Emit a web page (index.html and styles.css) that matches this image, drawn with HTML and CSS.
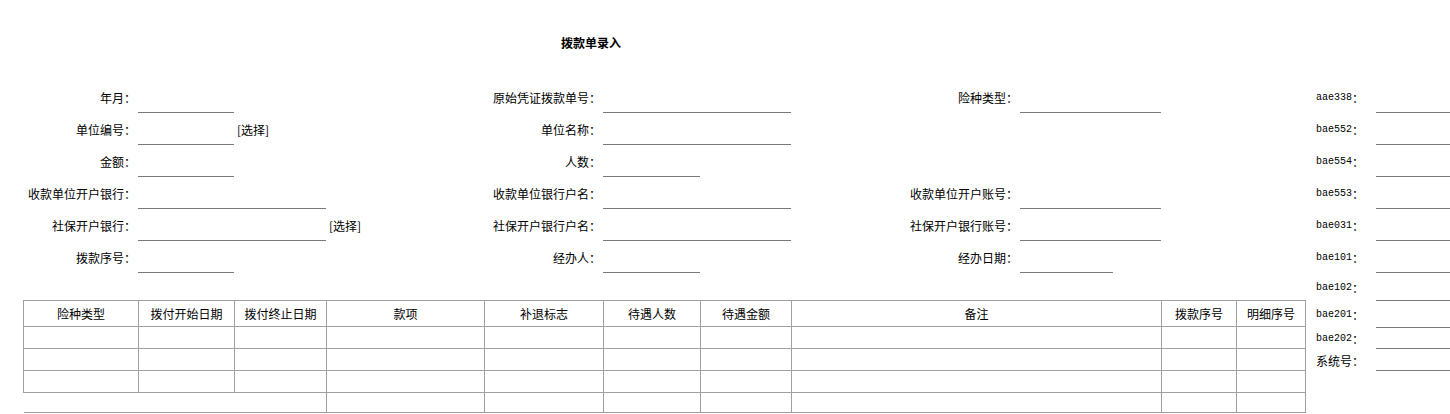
FILE: index.html
```html
<!DOCTYPE html>
<html lang="zh-CN">
<head>
<meta charset="utf-8">
<title>拨款单录入</title>
<link rel="stylesheet" href="styles.css">
</head>
<body>
<div class="page">
  <div class="main">
    <div class="title">拨款单录入</div>
    <div class="form">
      <label class="lbl">年月：</label>
      <div class="field"><input class="in short" type="text"></div>
      <label class="lbl">原始凭证拨款单号：</label>
      <div class="field"><input class="in long" type="text"></div>
      <label class="lbl">险种类型：</label>
      <div class="field"><input class="in mid" type="text"></div>

      <label class="lbl">单位编号：</label>
      <div class="field"><input class="in short" type="text"><span class="pick">[选择]</span></div>
      <label class="lbl">单位名称：</label>
      <div class="field"><input class="in long" type="text"></div>
      <div class="lbl"></div>
      <div class="field"></div>

      <label class="lbl">金额：</label>
      <div class="field"><input class="in short" type="text"></div>
      <label class="lbl">人数：</label>
      <div class="field"><input class="in short2" type="text"></div>
      <div class="lbl"></div>
      <div class="field"></div>

      <label class="lbl">收款单位开户银行：</label>
      <div class="field"><input class="in long" type="text"></div>
      <label class="lbl">收款单位银行户名：</label>
      <div class="field"><input class="in long" type="text"></div>
      <label class="lbl">收款单位开户账号：</label>
      <div class="field"><input class="in mid" type="text"></div>

      <label class="lbl">社保开户银行：</label>
      <div class="field"><input class="in long" type="text"><span class="pick">[选择]</span></div>
      <label class="lbl">社保开户银行户名：</label>
      <div class="field"><input class="in long" type="text"></div>
      <label class="lbl">社保开户银行账号：</label>
      <div class="field"><input class="in mid" type="text"></div>

      <label class="lbl">拨款序号：</label>
      <div class="field"><input class="in short" type="text"></div>
      <label class="lbl">经办人：</label>
      <div class="field"><input class="in short2" type="text"></div>
      <label class="lbl">经办日期：</label>
      <div class="field"><input class="in date" type="text"></div>
    </div>

    <table class="grid">
      <colgroup>
        <col class="c1"><col class="c2"><col class="c3"><col class="c4"><col class="c5">
        <col class="c6"><col class="c7"><col class="c8"><col class="c9"><col class="c10">
      </colgroup>
      <thead>
        <tr>
          <th>险种类型</th><th>拨付开始日期</th><th>拨付终止日期</th><th>款项</th><th>补退标志</th>
          <th>待遇人数</th><th>待遇金额</th><th>备注</th><th>拨款序号</th><th>明细序号</th>
        </tr>
      </thead>
      <tbody>
        <tr><td></td><td></td><td></td><td></td><td></td><td></td><td></td><td></td><td></td><td></td></tr>
        <tr><td></td><td></td><td></td><td></td><td></td><td></td><td></td><td></td><td></td><td></td></tr>
        <tr><td></td><td></td><td></td><td></td><td></td><td></td><td></td><td></td><td></td><td></td></tr>
      </tbody>
      <tfoot>
        <tr><td class="open" colspan="3"></td><td></td><td></td><td></td><td></td><td></td><td></td><td></td></tr>
      </tfoot>
    </table>
  </div>

  <div class="side">
    <label class="slbl"><span class="code">aae338</span>：</label><input class="in fill" type="text">
    <label class="slbl"><span class="code">bae552</span>：</label><input class="in fill" type="text">
    <label class="slbl"><span class="code">bae554</span>：</label><input class="in fill" type="text">
    <label class="slbl"><span class="code">bae553</span>：</label><input class="in fill" type="text">
    <label class="slbl"><span class="code">bae031</span>：</label><input class="in fill" type="text">
    <label class="slbl"><span class="code">bae101</span>：</label><input class="in fill" type="text">
    <label class="slbl"><span class="code">bae102</span>：</label><input class="in fill" type="text">
    <label class="slbl"><span class="code">bae201</span>：</label><input class="in fill" type="text">
    <label class="slbl"><span class="code">bae202</span>：</label><input class="in fill" type="text">
    <label class="slbl">系统号：</label><input class="in fill" type="text">
  </div>
</div>
</body>
</html>
```

FILE: styles.css
```css
html, body {
  margin: 0;
  padding: 0;
  background: #fff;
  overflow: hidden;
}

body {
  font-family: "Noto Sans CJK SC", "Liberation Sans", sans-serif;
  font-size: 12px;
  color: #000;
}

.page {
  display: flex;
  width: 1450px;
}

.main {
  width: 1305px;
  flex: none;
}

.title {
  width: 1182px;
  text-align: center;
  font-weight: bold;
  line-height: 16px;
  padding-top: 35px;
  margin-bottom: 30px;
}

.form {
  display: grid;
  grid-template-columns: 138px 250px 215px 200px 217px 162px;
  grid-auto-rows: 32px;
}

.lbl {
  display: flex;
  align-items: center;
  justify-content: flex-end;
  padding-right: 2px;
  white-space: nowrap;
}

.field {
  display: flex;
  align-items: center;
  gap: 3px;
}

.in {
  box-sizing: border-box;
  height: 32px;
  margin: 0;
  padding: 0;
  border: none;
  border-bottom: 1px solid #7a7a7a;
  background: transparent;
  font: inherit;
  outline: none;
}

.short { width: 96px; }
.short2 { width: 97px; }
.long { width: 188px; }
.mid { width: 141px; }
.date { width: 93px; }

.pick {
  white-space: nowrap;
}

.grid {
  margin: 27px 0 0 23px;
  border-collapse: collapse;
  table-layout: fixed;
  width: 1282px;
}

.c1 { width: 115px; }
.c2 { width: 96px; }
.c3 { width: 92px; }
.c4 { width: 158px; }
.c5 { width: 119px; }
.c6 { width: 97px; }
.c7 { width: 91px; }
.c8 { width: 370px; }
.c9 { width: 75px; }
.c10 { width: 69px; }

.grid th,
.grid td {
  border: 1px solid #a0a0a0;
  padding: 0;
  text-align: center;
  font-weight: normal;
}

.grid th { height: 25px; }
.grid tbody td { height: 21px; }
.grid tfoot td { height: 19px; }
.grid td.open { border-left: none; }

.side {
  flex: none;
  width: 145px;
  padding-top: 81px;
  display: grid;
  grid-template-columns: 71px 74px;
  grid-template-rows: repeat(6, 32px) 28px 27px 21px 22px;
  align-content: start;
}

.slbl {
  display: flex;
  align-items: center;
  padding-left: 11px;
  white-space: nowrap;
}

.code {
  font-family: "Liberation Mono", monospace;
  font-size: 10px;
}

.fill {
  width: 74px;
  height: 100%;
}
```
